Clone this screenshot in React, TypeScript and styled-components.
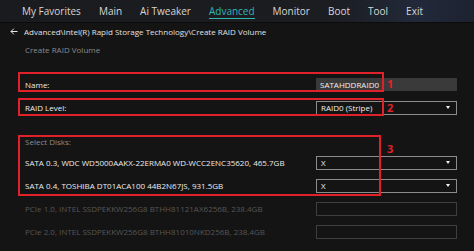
import styled, { createGlobalStyle } from 'styled-components'

const GlobalStyle = createGlobalStyle`
  html, body {
    margin: 0;
    padding: 0;
    background: #141414;
  }
  body {
    font-family: 'Open Sans', 'Noto Sans', sans-serif;
    color: #e6e6e6;
  }
`

const Screen = styled.div`
  width: 474px;
  height: 251px;
  overflow: hidden;
  background: #141414;
`

const TabBar = styled.nav`
  display: flex;
  align-items: center;
  gap: 18px;
  height: 22px;
  padding-left: 22px;
  background: linear-gradient(90deg, #1a1b1e 0%, #1b1d21 70%, #22293a 88%, #1d2230 100%);
  border-bottom: 1px solid #0b0b0b;
`

const Tab = styled.span<{ $active?: boolean }>`
  font-size: 10px;
  line-height: 14px;
  color: ${(p) => (p.$active ? '#30b7b4' : '#d6d6d6')};
  border-bottom: 1px solid ${(p) => (p.$active ? '#30b7b4' : 'transparent')};
`

const Breadcrumb = styled.div`
  display: flex;
  align-items: center;
  gap: 6px;
  height: 16px;
  padding-left: 10px;
  font-size: 8px;
  color: #e0e0e0;
`

const Title = styled.div`
  height: 16px;
  margin-top: 3px;
  padding-left: 25px;
  font-size: 8px;
  line-height: 16px;
  color: #8a8a8a;
`

const Form = styled.div`
  position: relative;
  margin-top: 15px;
`

const Row = styled.div<{ $dim?: boolean }>`
  display: flex;
  align-items: center;
  height: 23px;
  padding: 0 17px 0 25px;
  font-size: 8px;
  color: ${(p) => (p.$dim ? '#565656' : '#ececec')};
`

const Label = styled.span`
  flex: 1;
  white-space: nowrap;
`

const Gap = styled.div`
  height: 16px;
`

const SubHead = styled.div`
  padding-left: 25px;
  height: 16px;
  font-size: 8px;
  line-height: 14px;
  color: #8c8c8c;
`

const TextInput = styled.div`
  box-sizing: border-box;
  width: 141px;
  height: 13px;
  padding-left: 4px;
  background: #3a3a3a;
  font-size: 8px;
  line-height: 13px;
  color: #f0f0f0;
`

const Select = styled.div<{ $empty?: boolean }>`
  box-sizing: border-box;
  display: flex;
  align-items: center;
  justify-content: space-between;
  width: 141px;
  height: 14px;
  padding: 0 6px 0 4px;
  border: 1px solid ${(p) => (p.$empty ? '#3e3e3e' : '#8c8c8c')};
  font-size: 8px;
  color: #f0f0f0;
`

const Caret = styled.span`
  width: 0;
  height: 0;
  border-left: 2.5px solid transparent;
  border-right: 2.5px solid transparent;
  border-top: 3px solid #f4f4f4;
`

const Mark = styled.div<{ $top: number; $height: number; $width: number }>`
  position: absolute;
  left: 18px;
  top: ${(p) => p.$top}px;
  width: ${(p) => p.$width}px;
  height: ${(p) => p.$height}px;
  box-sizing: border-box;
  border: 2.5px solid #e0202a;
  pointer-events: none;
`

const MarkNumber = styled.span<{ $top: number }>`
  position: absolute;
  left: 387px;
  top: ${(p) => p.$top}px;
  font-size: 11px;
  font-weight: 700;
  line-height: 12px;
  color: #e0202a;
`

const tabs = ['My Favorites', 'Main', 'Ai Tweaker', 'Advanced', 'Monitor', 'Boot', 'Tool', 'Exit']

const disks = [
  { name: 'SATA 0.3, WDC WD5000AAKX-22ERMA0 WD-WCC2ENC35620, 465.7GB', value: 'X' },
  { name: 'SATA 0.4, TOSHIBA DT01ACA100 44B2N67JS, 931.5GB', value: 'X' },
  { name: 'PCIe 1.0, INTEL SSDPEKKW256G8 BTHH81121AX6256B, 238.4GB', dim: true },
  { name: 'PCIe 2.0, INTEL SSDPEKKW256G8 BTHH81010NKD256B, 238.4GB', dim: true },
]

function BackArrow() {
  return (
    <svg width="8" height="7" viewBox="0 0 8 7" fill="none" stroke="#e6e6e6" strokeWidth="1">
      <path d="M7.5 3.5H1M3.8 0.7L1 3.5l2.8 2.8" />
    </svg>
  )
}

function App() {
  return (
    <Screen>
      <GlobalStyle />
      <TabBar>
        {tabs.map((t) => (
          <Tab key={t} $active={t === 'Advanced'}>
            {t}
          </Tab>
        ))}
      </TabBar>
      <Breadcrumb>
        <BackArrow />
        <span>Advanced\Intel(R) Rapid Storage Technology\Create RAID Volume</span>
      </Breadcrumb>
      <Title>Create RAID Volume</Title>
      <Form>
        <Row>
          <Label>Name:</Label>
          <TextInput>SATAHDDRAID0</TextInput>
        </Row>
        <Row>
          <Label>RAID Level:</Label>
          <Select>
            RAID0 (Stripe)
            <Caret />
          </Select>
        </Row>
        <Gap />
        <SubHead>Select Disks:</SubHead>
        {disks.map((d) => (
          <Row key={d.name} $dim={d.dim}>
            <Label>{d.name}</Label>
            <Select $empty={d.dim}>
              {d.value}
              {d.value && <Caret />}
            </Select>
          </Row>
        ))}
        <Mark $top={-1} $height={20} $width={366} />
        <MarkNumber $top={5}>1</MarkNumber>
        <Mark $top={25} $height={18} $width={366} />
        <MarkNumber $top={29}>2</MarkNumber>
        <Mark $top={62} $height={61} $width={363} />
        <MarkNumber $top={70}>3</MarkNumber>
      </Form>
    </Screen>
  )
}

export default App
